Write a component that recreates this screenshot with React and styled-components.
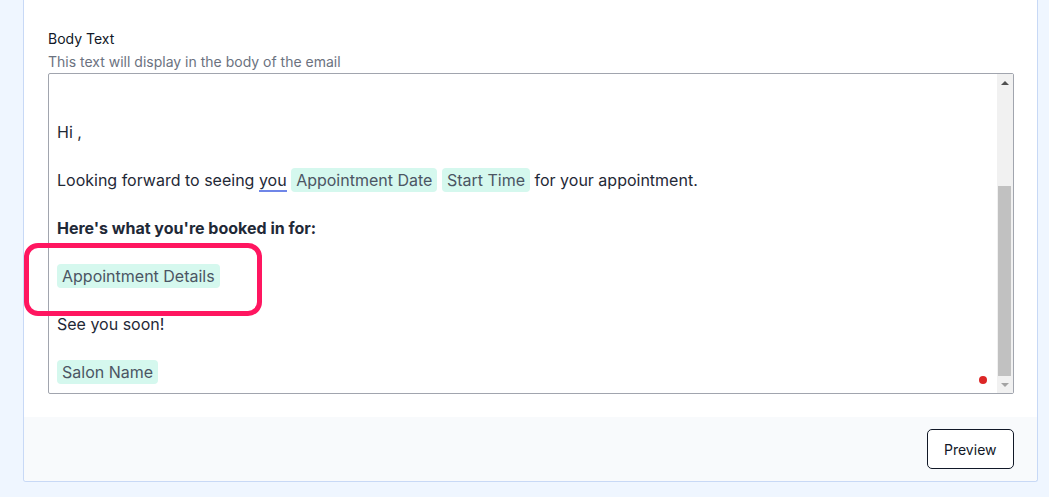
import React from 'react';
import styled, { createGlobalStyle } from 'styled-components';

const GlobalStyle = createGlobalStyle`
    body {
        margin: 0;
        background: #eff6ff;
        font-family: Inter, "Noto Sans", sans-serif;
        color: #1f2937;
    }
`;

const Page = styled.div`
    position: relative;
    height: 497px;
    padding-left: 23px;
`;

const Card = styled.div`
    width: 1013px;
    background: #fff;
    border: 1px solid #c8d9f6;
    border-top: none;
    border-radius: 0 0 3px 3px;
`;

const CardBody = styled.div`
    padding: 29px 23px 23px 24px;
`;

const Label = styled.div`
    font-size: 14px;
    line-height: 20px;
    color: #111827;
`;

const Hint = styled.div`
    font-size: 14px;
    line-height: 20px;
    margin-top: 3px;
    color: #6b7280;
`;

const Editor = styled.div`
    position: relative;
    display: flex;
    height: 319px;
    margin-top: 1px;
    border: 1px solid #a1a5ae;
    border-radius: 2px;
`;

const Content = styled.div`
    flex: 1;
    padding: 46px 8px 0;
    font-size: 16px;
    line-height: 24px;
    color: #1f2937;
`;

const Para = styled.p`
    margin: 0 0 24px;
    font-weight: ${(p) => (p.$bold ? 700 : 400)};
`;

const Chip = styled.span`
    display: inline-block;
    padding: 0 5px;
    border-radius: 4px;
    background: #d5f8ee;
    color: #4b5563;
`;

const Underlined = styled.span`
    border-bottom: 2px solid #6f86e8;
    line-height: 19px;
    display: inline-block;
`;

const Scrollbar = styled.div`
    width: 16px;
    display: flex;
    flex-direction: column;
    background: #f1f1f1;
`;

const Arrow = styled.div`
    height: 17px;
    display: flex;
    align-items: center;
    justify-content: center;
    flex-shrink: 0;

    &::before {
        content: '';
        border-left: 4px solid transparent;
        border-right: 4px solid transparent;
        ${(p) =>
            p.$down
                ? 'border-top: 4px solid #a3a3a3;'
                : 'border-bottom: 4px solid #505050;'}
    }
`;

const Track = styled.div`
    flex: 1;
    display: flex;
    flex-direction: column;
    justify-content: flex-end;
    padding: 0 2px 0 1px;
`;

const Thumb = styled.div`
    height: 190px;
    background: #c1c1c1;
`;

const Dot = styled.span`
    position: absolute;
    right: 26px;
    bottom: 9px;
    width: 8px;
    height: 8px;
    border-radius: 50%;
    background: #dc2626;
`;

const Footer = styled.div`
    display: flex;
    justify-content: flex-end;
    padding: 12px 23px 12px 0;
    background: #f8fafc;
    border-radius: 0 0 3px 3px;
`;

const Button = styled.button`
    height: 40px;
    padding: 0 16.5px;
    border: 1.5px solid #111827;
    border-radius: 5px;
    background: #fff;
    font-family: Inter, "Noto Sans", sans-serif;
    font-size: 14px;
    color: #111827;
`;

const Highlight = styled.div`
    position: absolute;
    left: 24px;
    top: 243px;
    width: 228px;
    height: 63px;
    border: 5px solid #ff1660;
    border-radius: 14px;
`;

export default function App() {
    return (
        <>
            <GlobalStyle />
            <Page>
                <Card>
                    <CardBody>
                        <Label>Body Text</Label>
                        <Hint>This text will display in the body of the email</Hint>
                        <Editor>
                            <Content>
                                <Para>Hi ,</Para>
                                <Para>
                                    Looking forward to seeing <Underlined>you</Underlined>{' '}
                                    <Chip>Appointment Date</Chip> <Chip>Start Time</Chip> for your
                                    appointment.
                                </Para>
                                <Para $bold>Here's what you're booked in for:</Para>
                                <Para>
                                    <Chip>Appointment Details</Chip>
                                </Para>
                                <Para>See you soon!</Para>
                                <Para>
                                    <Chip>Salon Name</Chip>
                                </Para>
                            </Content>
                            <Scrollbar>
                                <Arrow />
                                <Track>
                                    <Thumb />
                                </Track>
                                <Arrow $down />
                            </Scrollbar>
                            <Dot />
                        </Editor>
                    </CardBody>
                    <Footer>
                        <Button>Preview</Button>
                    </Footer>
                </Card>
                <Highlight />
            </Page>
        </>
    );
}
